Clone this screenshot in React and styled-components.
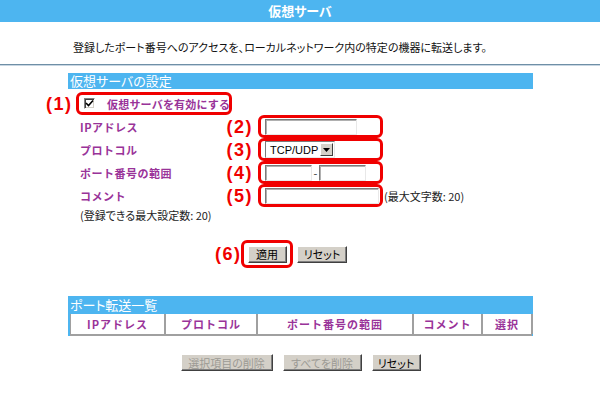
import styled, { createGlobalStyle } from "styled-components";

const BLUE = "#4db5f0";
const PURPLE = "#993399";
const RED = "#f00000";

const GlobalStyle = createGlobalStyle`
  html, body {
    margin: 0;
    padding: 0;
    background: #ffffff;
  }
  body {
    font-family: "Noto Sans CJK JP", "Liberation Sans", sans-serif;
    font-size: 12px;
    color: #222;
    font-feature-settings: "palt";
  }
`;

export default function App() {
  return (
    <Page>
      <GlobalStyle />
      <TitleBar>仮想サーバ</TitleBar>
      <Description>
        登録したポート番号へのアクセスを、ローカルネットワーク内の特定の機器に転送します。
      </Description>
      <Divider />
      <Main>
        <SectionHeader>仮想サーバの設定</SectionHeader>

        <CheckRow>
          <Marker $width={24} $gap={6}>(1)</Marker>
          <RedBox $width={156}>
            <CheckBox>
              <svg width="9" height="9" viewBox="0 0 9 9">
                <path d="M1 4 L3.5 6.5 L8 1.5" stroke="#000" strokeWidth="1.6" fill="none" />
              </svg>
            </CheckBox>
            <CheckLabel>仮想サーバを有効にする</CheckLabel>
          </RedBox>
        </CheckRow>

        <FieldRow>
          <Label>IPアドレス</Label>
          <Marker $width={30} $gap={5}>(2)</Marker>
          <RedBox $width={125}>
            <TextInput $width={92} />
          </RedBox>
        </FieldRow>

        <FieldRow>
          <Label>プロトコル</Label>
          <Marker $width={30} $gap={5}>(3)</Marker>
          <RedBox $width={125}>
            <SelectBox>
              <SelectText>TCP/UDP</SelectText>
              <SelectArrow>
                <svg width="7" height="4" viewBox="0 0 7 4">
                  <path d="M0 0 H7 L3.5 4 Z" fill="#000" />
                </svg>
              </SelectArrow>
            </SelectBox>
          </RedBox>
        </FieldRow>

        <FieldRow>
          <Label>ポート番号の範囲</Label>
          <Marker $width={30} $gap={5}>(4)</Marker>
          <RedBox $width={125}>
            <TextInput $width={47} />
            <Dash>-</Dash>
            <TextInput $width={47} />
          </RedBox>
        </FieldRow>

        <FieldRow>
          <Label>コメント</Label>
          <Marker $width={30} $gap={5}>(5)</Marker>
          <RedBox $width={125}>
            <TextInput $width={114} />
          </RedBox>
          <Hint>(最大文字数: 20)</Hint>
        </FieldRow>

        <Note>(登録できる最大設定数: 20)</Note>

        <ApplyRow>
          <Marker $width={23}>(6)</Marker>
          <RedBox $width={52} $height={28} $center>
            <Button $width={39}>適用</Button>
          </RedBox>
          <Button $width={50}>リセット</Button>
        </ApplyRow>

        <ListHeader>ポート転送一覧</ListHeader>
        <TableWrap>
          <HeadRow>
            <HeadCell>IPアドレス</HeadCell>
            <HeadCell>プロトコル</HeadCell>
            <HeadCell>ポート番号の範囲</HeadCell>
            <HeadCell>コメント</HeadCell>
            <HeadCell>選択</HeadCell>
          </HeadRow>
        </TableWrap>

        <BottomButtons>
          <Button $width={92} disabled>選択項目の削除</Button>
          <Button $width={79} disabled>すべてを削除</Button>
          <Button $width={49}>リセット</Button>
        </BottomButtons>
      </Main>
    </Page>
  );
}

const Page = styled.div`
  width: 600px;
  min-height: 398px;
  background: #ffffff;
`;

const TitleBar = styled.div`
  height: 22px;
  line-height: 22px;
  background: ${BLUE};
  color: #ffffff;
  font-weight: 700;
  font-size: 13px;
  text-align: center;
`;

const Description = styled.div`
  padding: 18px 0 10px 73px;
  height: 14px;
  line-height: 14px;
  font-size: 11px;
  color: #111;
  white-space: nowrap;
`;

const Divider = styled.div`
  height: 0;
  border-top: 1px solid #6f8fa6;
  border-bottom: 1px solid #c8d6e2;
`;

const Main = styled.div`
  width: 465px;
  margin-left: 68px;
  padding-top: 7px;
  display: flex;
  flex-direction: column;
`;

const SectionHeader = styled.div`
  height: 16px;
  line-height: 16px;
  background: ${BLUE};
  color: #ffffff;
  font-size: 13px;
  padding-left: 2px;
`;

const CheckRow = styled.div`
  display: flex;
  align-items: center;
  margin: 3px 0 0 -22px;
  height: 23px;
`;

const FieldRow = styled.div`
  display: flex;
  align-items: center;
  height: 23px;
  padding-left: 12px;
`;

const Marker = styled.div`
  width: ${(p) => p.$width}px;
  margin-right: ${(p) => p.$gap ?? 3}px;
  text-align: right;
  white-space: nowrap;
  color: ${RED};
  font-family: "Liberation Sans", "Noto Sans", sans-serif;
  font-weight: 700;
  font-size: 18px;
  letter-spacing: 1.5px;
  line-height: 20px;
`;

const RedBox = styled.div`
  box-sizing: border-box;
  width: ${(p) => p.$width}px;
  height: ${(p) => p.$height || 23}px;
  border: 3px solid ${RED};
  border-radius: 6px;
  display: flex;
  align-items: center;
  justify-content: ${(p) => (p.$center ? "center" : "flex-start")};
  padding-left: ${(p) => (p.$center ? 0 : 4)}px;
`;

const CheckBox = styled.span`
  box-sizing: border-box;
  flex: none;
  width: 11px;
  height: 11px;
  margin-left: 1px;
  border: 1px solid;
  border-color: #808080 #ffffff #ffffff #808080;
  box-shadow: inset 1px 1px 0 #404040, inset -1px -1px 0 #d4d0c8;
  background: #ffffff;
  display: flex;
  align-items: center;
  justify-content: center;
`;

const CheckLabel = styled.span`
  margin-left: 12px;
  color: ${PURPLE};
  font-weight: 700;
  font-size: 11px;
  font-feature-settings: normal;
  letter-spacing: 0.2px;
  white-space: nowrap;
`;

const Label = styled.div`
  width: 143px;
  color: ${PURPLE};
  font-weight: 700;
  font-size: 11px;
  font-feature-settings: normal;
  letter-spacing: 0.5px;
  white-space: nowrap;
`;

const TextInput = styled.div`
  box-sizing: border-box;
  width: ${(p) => p.$width}px;
  height: 16px;
  background: #ffffff;
  border: 1px solid;
  border-color: #7a7a7a #e8e8e8 #e8e8e8 #7a7a7a;
  box-shadow: inset 1px 1px 0 #b0b0b0;
`;

const Dash = styled.span`
  width: 7px;
  text-align: center;
  font-size: 11px;
  line-height: 16px;
  color: #333;
`;

const SelectBox = styled.div`
  box-sizing: border-box;
  width: 70px;
  height: 17px;
  display: flex;
  align-items: center;
  justify-content: space-between;
  padding: 0 1px 0 4px;
  background: #ffffff;
  border: 1px solid;
  border-color: #7a7a7a #e8e8e8 #e8e8e8 #7a7a7a;
`;

const SelectText = styled.span`
  font-family: "Liberation Sans", Arial, sans-serif;
  font-size: 11px;
  color: #000;
`;

const SelectArrow = styled.span`
  box-sizing: border-box;
  width: 13px;
  height: 13px;
  background: #d4d0c8;
  border: 1px solid;
  border-color: #ffffff #404040 #404040 #ffffff;
  display: flex;
  align-items: center;
  justify-content: center;
`;

const Hint = styled.span`
  margin-left: 1px;
  font-size: 11px;
  color: #222;
  white-space: nowrap;
`;

const Note = styled.div`
  padding-left: 12px;
  margin-top: 1px;
  height: 14px;
  line-height: 14px;
  font-size: 11px;
  color: #222;
`;

const ApplyRow = styled.div`
  display: flex;
  align-items: center;
  margin: 18px 0 0 147px;
  height: 28px;

  & > button:last-child {
    margin-left: 4px;
  }
`;

const Button = styled.button`
  box-sizing: border-box;
  width: ${(p) => p.$width}px;
  height: 17px;
  padding: 0;
  background: #d4d0c8;
  border: 1px solid;
  border-color: #ffffff #404040 #404040 #ffffff;
  box-shadow: inset -1px -1px 0 #808080;
  font-family: "Noto Sans CJK JP", sans-serif;
  font-feature-settings: "palt";
  font-size: 11px;
  line-height: 14px;
  color: #000;
  cursor: pointer;

  &:disabled {
    color: #9c9a94;
    cursor: default;
  }
`;

const ListHeader = styled.div`
  margin-top: 28px;
  height: 17px;
  line-height: 17px;
  background: ${BLUE};
  color: #ffffff;
  font-size: 13px;
  padding-left: 2px;
`;

const TableWrap = styled.div`
  background: ${BLUE};
  padding: 1px 1px 0 2px;
`;

const HeadRow = styled.div`
  display: grid;
  grid-template-columns: 95px 92px 156px 69px 50px;
  background: #ffffff;
  border-left: 1px solid #a0a0a0;
  border-bottom: 2px solid #a0a0a0;
`;

const HeadCell = styled.div`
  height: 20px;
  line-height: 20px;
  text-align: center;
  border-right: 2px solid #a0a0a0;
  color: ${PURPLE};
  font-weight: 700;
  font-size: 11px;
  font-feature-settings: normal;
  letter-spacing: 1px;
`;

const BottomButtons = styled.div`
  display: flex;
  justify-content: center;
  gap: 10px;
  margin-top: 18px;
`;
